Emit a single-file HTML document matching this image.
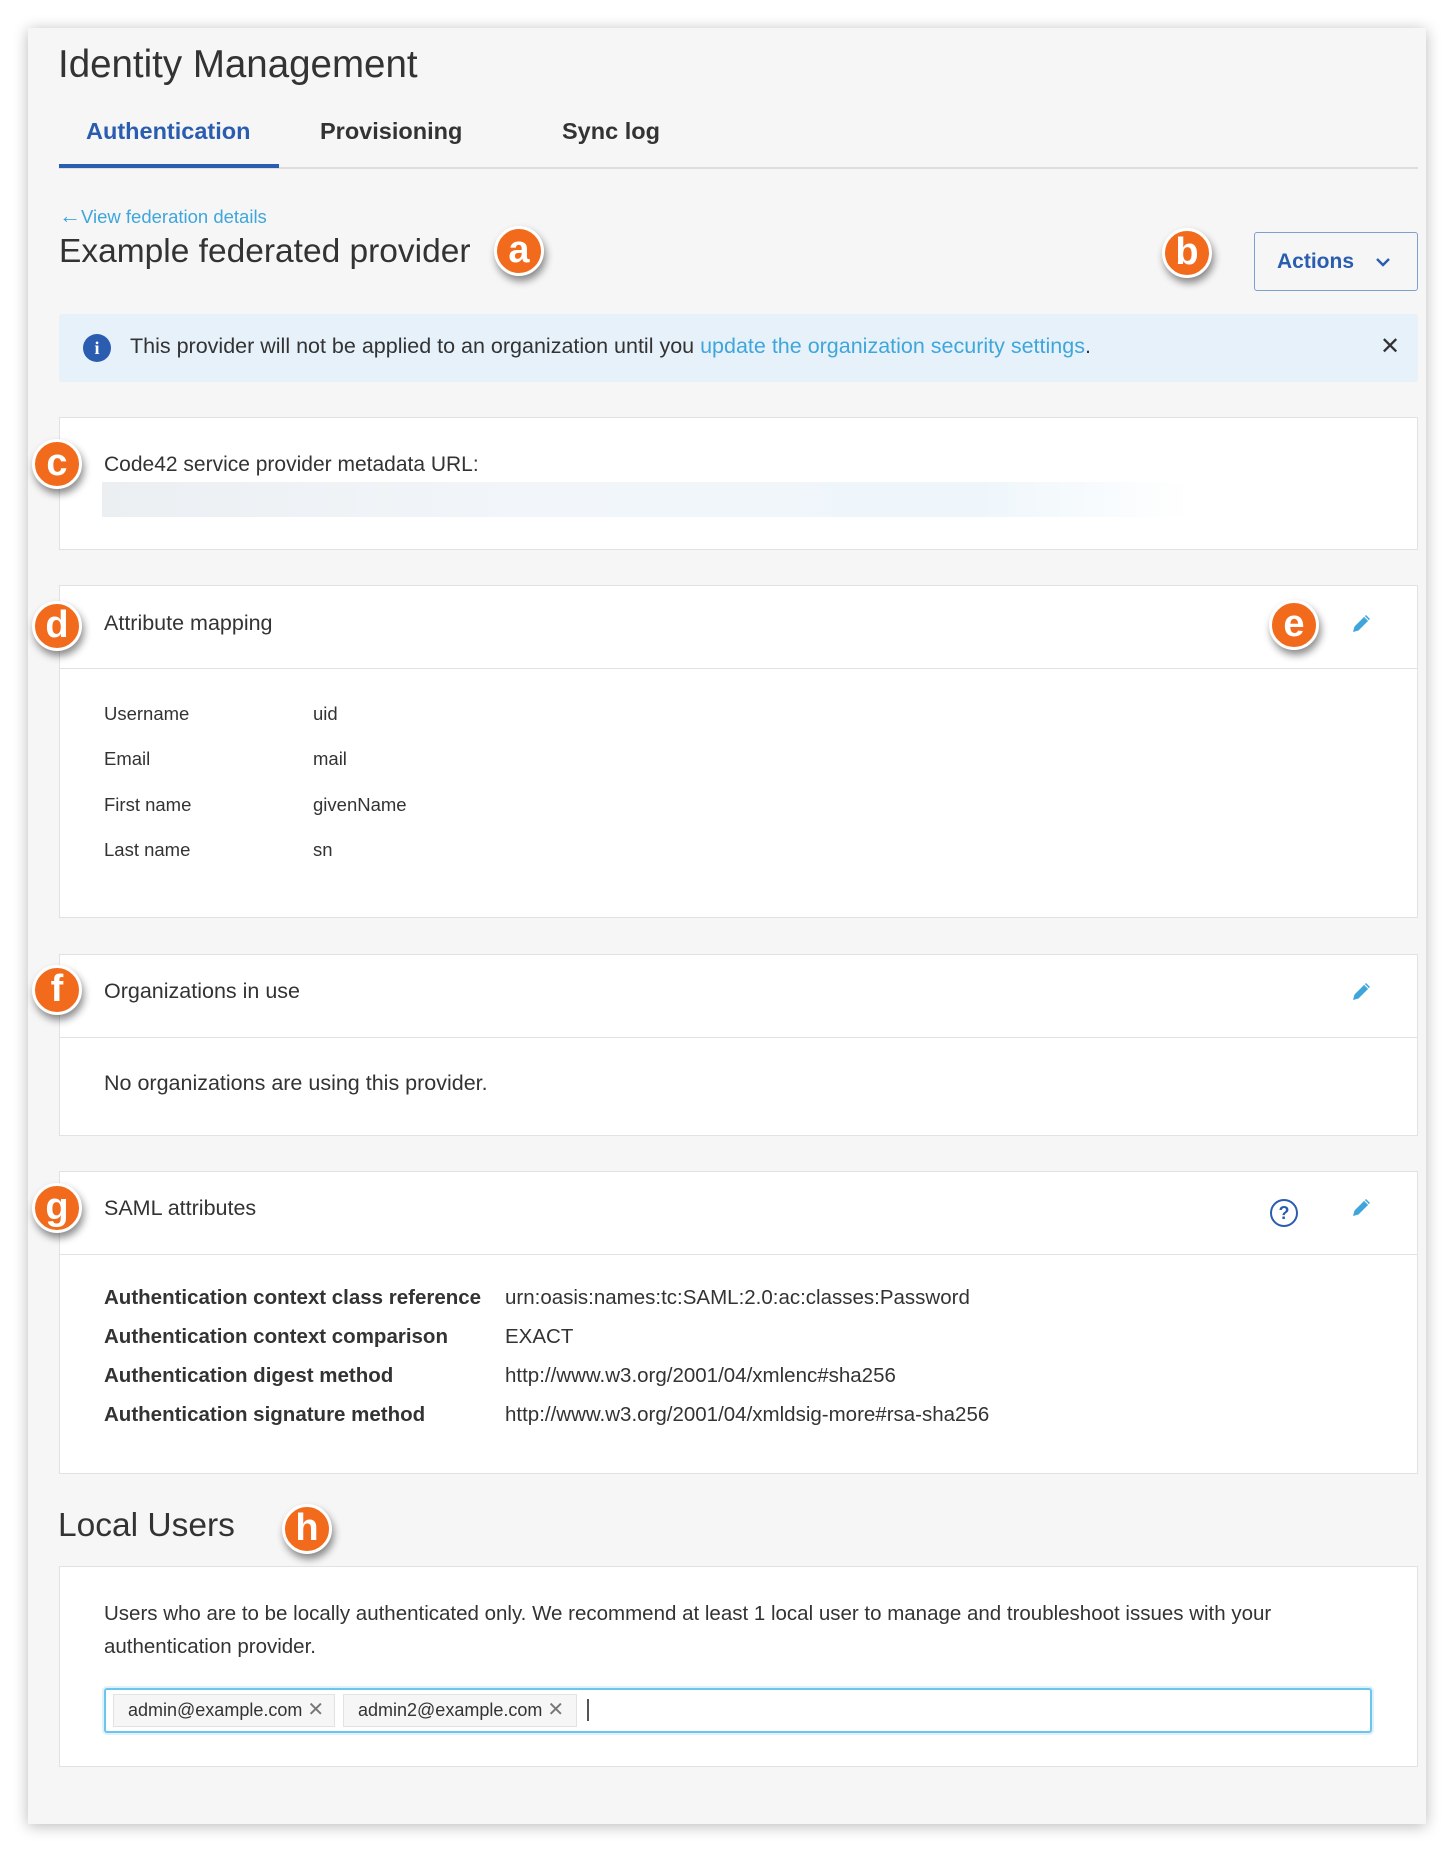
<!DOCTYPE html>
<html><head><meta charset="utf-8"><style>
*{box-sizing:border-box;margin:0;padding:0}
body{width:1456px;height:1854px;background:#fff;font-family:"Liberation Sans",sans-serif;color:#333;position:relative;overflow:hidden}
.a{position:absolute;white-space:nowrap}
.panel{position:absolute;left:28px;top:28px;width:1398px;height:1796px;background:#f6f6f6;box-shadow:0 2px 14px rgba(0,0,0,.28)}
.card{position:absolute;left:59px;width:1359px;background:#fff;border:1px solid #e2e2e2}
.hr{position:absolute;left:0;right:0;height:1px;background:#e2e2e2}
.b{position:absolute;width:50px;height:50px;border-radius:50%;background:#f26a1b;border:3px solid #fff;box-shadow:2px 5px 8px rgba(0,0,0,.45);color:#fff;font:bold 38px/42px "Liberation Sans",sans-serif;text-align:center}
.lbl{font-size:18.5px}
.h{font-size:21.5px}
.bold{font-weight:bold}
</style></head><body>
<div class="panel"></div>
<div class="a" style="left:58px;top:43px;font-size:38.5px;color:#333">Identity Management</div>
<div class="a bold" style="left:86px;top:118px;font-size:23.5px;color:#2a5db0">Authentication</div>
<div class="a bold" style="left:320px;top:118px;font-size:23.5px;color:#333">Provisioning</div>
<div class="a bold" style="left:562px;top:118px;font-size:23.5px;color:#333">Sync log</div>
<div class="a" style="left:59px;top:167px;width:1359px;height:2px;background:#ddd"></div>
<div class="a" style="left:59px;top:164px;width:220px;height:4px;background:#2a5db0"></div>
<div class="a" style="left:59px;top:203px;font-size:18.5px;color:#3fa6dc"><span style="font-size:22px">&#8592;</span>View federation details</div>
<div class="a" style="left:59px;top:233px;font-size:33.5px;color:#333">Example federated provider</div>
<div class="a" style="left:1254px;top:232px;width:164px;height:59px;border:1px solid #7f9fcf;border-radius:3px;color:#2a5db0;font-weight:bold;font-size:21px;line-height:57px;padding-left:22px">Actions <svg width="18" height="12" style="margin-left:14px" viewBox="0 0 18 12"><path d="M3 3l6 6 6-6" fill="none" stroke="#2a5db0" stroke-width="2.4"/></svg></div>
<div class="a" style="left:59px;top:314px;width:1359px;height:68px;background:#e6f1fa;border-radius:3px"></div>
<div class="a" style="left:83px;top:334px;width:28px;height:28px;border-radius:50%;background:#2a5db0;color:#fff;font:bold 18px/28px 'Liberation Serif',serif;text-align:center">i</div>
<div class="a" style="left:130px;top:334px;font-size:21.5px">This provider will not be applied to an organization until you <span style="color:#3fa6dc">update the organization security settings</span>.</div>
<div class="a" style="left:1380px;top:332px;font-size:24px;color:#333">&#10005;</div>

<div class="card" style="top:417px;height:133px"></div>
<div class="a" style="left:104px;top:453px;font-size:21px">Code42 service provider metadata URL:</div>
<div class="a" style="left:102px;top:482px;width:1090px;height:35px;background:linear-gradient(90deg,#eceff2,#f2f6fa 40%,#eef6fb 80%,#fff)"></div>

<div class="card" style="top:585px;height:333px"><div class="hr" style="top:82px"></div></div>
<div class="a h" style="left:104px;top:611px">Attribute mapping</div>
<div class="a lbl" style="left:104px;top:703px">Username</div><div class="a lbl" style="left:313px;top:703px">uid</div>
<div class="a lbl" style="left:104px;top:748px">Email</div><div class="a lbl" style="left:313px;top:748px">mail</div>
<div class="a lbl" style="left:104px;top:794px">First name</div><div class="a lbl" style="left:313px;top:794px">givenName</div>
<div class="a lbl" style="left:104px;top:839px">Last name</div><div class="a lbl" style="left:313px;top:839px">sn</div>

<div class="card" style="top:954px;height:182px"><div class="hr" style="top:82px"></div></div>
<div class="a h" style="left:104px;top:979px">Organizations in use</div>
<div class="a h" style="left:104px;top:1071px">No organizations are using this provider.</div>

<div class="card" style="top:1171px;height:303px"><div class="hr" style="top:82px"></div></div>
<div class="a h" style="left:104px;top:1196px">SAML attributes</div>
<div class="a" style="left:1270px;top:1199px;width:28px;height:28px;border:2px solid #2a5db0;border-radius:50%;color:#2a5db0;font:bold 18px/24px 'Liberation Sans',sans-serif;text-align:center">?</div>
<div class="a bold" style="left:104px;top:1286px;font-size:20.5px">Authentication context class reference</div><div class="a" style="left:505px;top:1286px;font-size:20.5px">urn:oasis:names:tc:SAML:2.0:ac:classes:Password</div>
<div class="a bold" style="left:104px;top:1325px;font-size:20.5px">Authentication context comparison</div><div class="a" style="left:505px;top:1325px;font-size:20.5px">EXACT</div>
<div class="a bold" style="left:104px;top:1364px;font-size:20.5px">Authentication digest method</div><div class="a" style="left:505px;top:1364px;font-size:20.5px">http://www.w3.org/2001/04/xmlenc#sha256</div>
<div class="a bold" style="left:104px;top:1403px;font-size:20.5px">Authentication signature method</div><div class="a" style="left:505px;top:1403px;font-size:20.5px">http://www.w3.org/2001/04/xmldsig-more#rsa-sha256</div>

<div class="a" style="left:58px;top:1507px;font-size:33.5px">Local Users</div>
<div class="card" style="top:1566px;height:201px"></div>
<div class="a" style="left:104px;top:1597px;font-size:20.5px;line-height:33px;white-space:normal;width:1250px">Users who are to be locally authenticated only. We recommend at least 1 local user to manage and troubleshoot issues with your authentication provider.</div>
<div class="a" style="left:104px;top:1688px;width:1268px;height:45px;border:2px solid #6cc6ec;border-radius:3px;box-shadow:0 0 0 2px #dff1fa"></div>
<div class="a" style="left:113px;top:1694px;height:33px;width:222px;background:#f6f6f6;border:1px solid #e2e2e2;font-size:18px;line-height:31px;padding-left:14px">admin@example.com <span style="color:#777;font-size:20px">&#10005;</span></div>
<div class="a" style="left:343px;top:1694px;height:33px;width:234px;background:#f6f6f6;border:1px solid #e2e2e2;font-size:18px;line-height:31px;padding-left:14px">admin2@example.com <span style="color:#777;font-size:20px">&#10005;</span></div>
<div class="a" style="left:587px;top:1699px;width:2px;height:22px;background:#555"></div>

<svg class="a" style="left:1350px;top:611px" width="24" height="24" viewBox="0 0 24 24"><path d="M3 21l1.5-5.5L16 4l4 4L8.5 19.5z" fill="#3fa6dc"/><path d="M14.5 5.5l4 4" stroke="#fff" stroke-width="1.2"/></svg>
<svg class="a" style="left:1350px;top:979px" width="24" height="24" viewBox="0 0 24 24"><path d="M3 21l1.5-5.5L16 4l4 4L8.5 19.5z" fill="#3fa6dc"/><path d="M14.5 5.5l4 4" stroke="#fff" stroke-width="1.2"/></svg>
<svg class="a" style="left:1350px;top:1195px" width="24" height="24" viewBox="0 0 24 24"><path d="M3 21l1.5-5.5L16 4l4 4L8.5 19.5z" fill="#3fa6dc"/><path d="M14.5 5.5l4 4" stroke="#fff" stroke-width="1.2"/></svg>

<div class="b" style="left:494px;top:226px">a</div>
<div class="b" style="left:1162px;top:228px">b</div>
<div class="b" style="left:32px;top:439px">c</div>
<div class="b" style="left:32px;top:601px">d</div>
<div class="b" style="left:1269px;top:600px">e</div>
<div class="b" style="left:32px;top:965px">f</div>
<div class="b" style="left:32px;top:1183px">g</div>
<div class="b" style="left:282px;top:1504px">h</div>
</body></html>
